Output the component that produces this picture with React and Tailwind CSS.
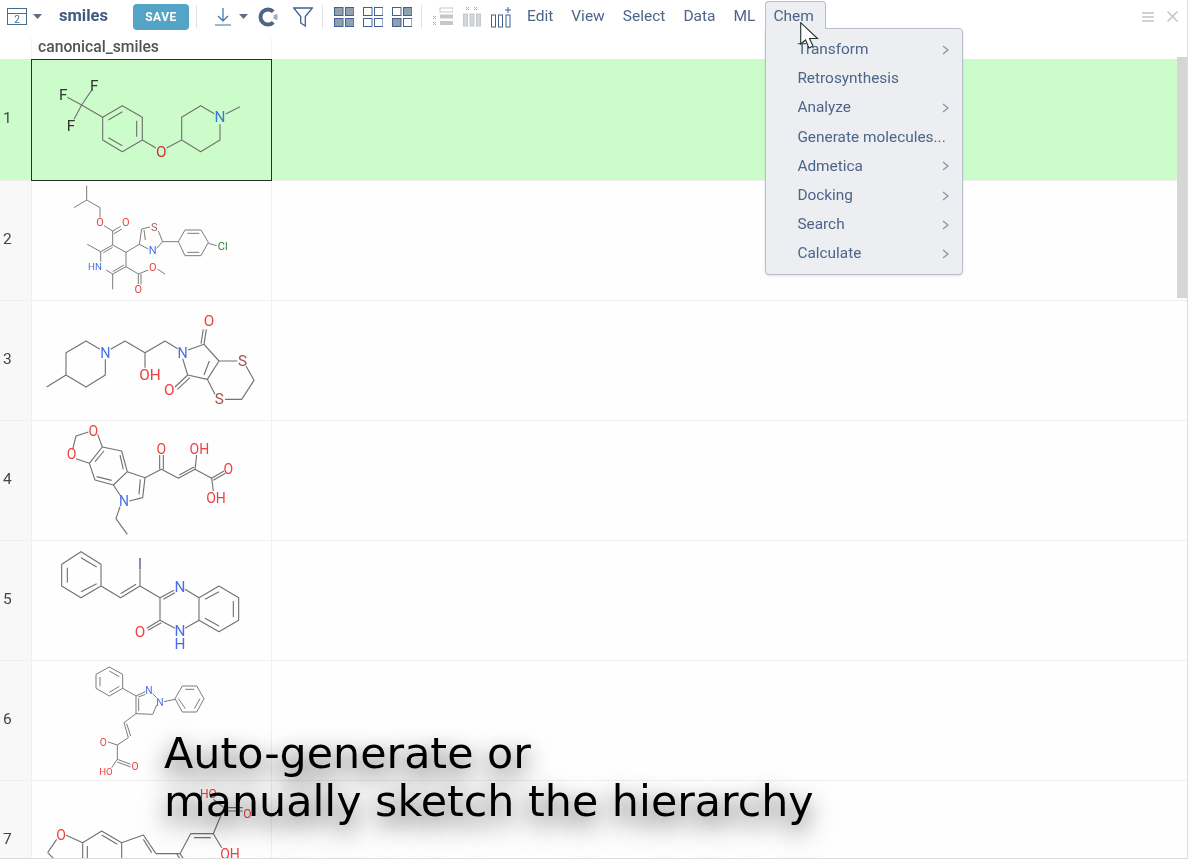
import React from "react";

const Mol = ({ top, d, labels, size = 42, sw = 3.400 }) => (
  <svg width="240" height="120" viewBox={`93 ${top} 720 360`} className="block shrink-0" style={{ fontFamily: "Roboto, sans-serif" }}>
    <path d={d} fill="none" stroke="#727272" strokeWidth={sw} strokeLinejoin="round" />
    {labels.map(([t, x, y, c, s], i) => (
      <text key={i} x={x} y={y} fill={c} fontSize={s || size} textAnchor="middle" dominantBaseline="central">{t}</text>
    ))}
  </svg>
);

const R = "#f04040", B = "#4a6ee8", K = "#333";

const mols = [
  {
    top: 12, size: 46, labels: [["F", 190, 120, K], ["F", 283, 93, K], ["F", 213, 212, K], ["O", 484, 290, "#c8323c"], ["N", 660, 187, "#3a7bd5"]],
    d: "M245 150L202 127M245 150L274 107M245 150L222 193M245 150L308 187L367 152L427 187L427 255L367 290L308 255L308 187M325 195L367 170M410 197L410 245M325 248L367 272M427 255L468 279M500 279L545 255L545 187L602 152L643 176M660 208L660 255L602 290L545 255M677 177L720 155",
  },
  {
    top: 378, size: 33, sw: 2.800, labels: [["O", 300, 502, R], ["O", 377, 502, R], ["HN", 285, 635, B, 29], ["O", 415, 703, R], ["O", 458, 638, R], ["S", 463, 517, "#a06060"], ["N", 458, 587, B], ["Cl", 668, 573, "#2e7d32"]],
    d: "M260 392L260 435M222 458L260 435L300 458L300 488M312 512L338 528L362 514M342 536L366 522M338 528L338 570L378 592L378 635L338 657L318 645M302 620L302 590L338 570M310 593L338 577M372 630L338 650M302 590L262 568M338 657L338 703M378 635L415 657L415 688M423 657L423 688M415 657L445 645M472 642L495 657M378 592L418 568L425 522L450 516M432 525L436 555M475 528L488 560L470 580M445 582L418 568M488 560L535 560L555 525L603 525L625 562L603 602L555 602L535 560M562 535L598 535M562 592L598 592M625 565L650 572",
  },
  {
    top: 0, size: 46, labels: [["N", 316, 155, B, 43], ["OH", 450, 222, R], ["N", 548, 155, B, 43], ["O", 627, 60, R], ["O", 508, 268, R], ["S", 728, 180, "#a85050"], ["S", 658, 295, "#a85050"]],
    d: "M140 258L198 222L198 155L258 120L300 145M316 175L316 222L258 258L198 222M332 145L375 120L435 155L495 120L533 143M435 155L435 200M564 147L612 130L657 180L622 235L563 222L548 173M628 180L612 222M612 130L619 85M603 128L610 85M563 222L525 258M570 230L532 265M657 180L712 180M738 195L762 238L725 295L675 295M645 280L622 235",
  },
  {
    top: 360, size: 42, labels: [["O", 280, 390, R], ["O", 215, 460, R], ["N", 372, 600, B], ["O", 484, 443, R], ["OH", 598, 443, R], ["O", 685, 503, R], ["OH", 648, 590, R]],
    d: "M228 405L265 393M228 405L218 445M293 400L307 438M228 473L268 487L307 438L365 450L382 512L340 552L285 537L268 487M285 482L312 450M360 462L370 505M290 527L335 538M382 512L435 530L428 590L388 600M362 585L340 552M421 535L417 580M435 530L484 505L535 532L585 505L635 532L672 510M479 505L479 462M490 505L490 462M538 522L582 498M585 505L590 462M640 538L676 517M635 532L640 570M360 617L348 653L382 700",
  },
  {
    top: 0, size: 46, labels: [["N", 540, 138, B], ["N", 540, 270, B], ["H", 540, 310, B], ["O", 420, 272, R], ["I", 420, 68, "#5a5a90", 44]],
    d: "M185 70L243 32L303 70L303 135L243 170L185 135L185 70M202 80L202 125M243 50L290 78M290 128L243 152M303 135L362 170L420 135M362 158L408 130M420 135L420 85M420 135L480 170L522 148M555 145L597 170L597 238L555 262M525 262L480 238L480 170M490 175L525 155M480 238L440 262M484 245L444 268M597 170L657 135L716 170L716 238L657 272L597 238M615 175L657 152M700 180L700 228M615 232L657 255",
  },
  {
    top: 360, size: 31, sw: 2.800, labels: [["N", 447, 447, B], ["N", 480, 483, B], ["O", 310, 603, R], ["O", 405, 675, R], ["HO", 318, 690, R, 29]],
    d: "M328 378L368 400L368 442L328 465L288 442L288 400L328 378M300 408L300 436M328 390L358 407M358 436L328 454M368 442L408 465L436 452M415 468L436 460M458 458L470 470M470 492L458 520L408 518L408 465M416 472L416 510M525 473L547 435L590 435L612 473L590 513L547 513L525 473M556 445L583 445M600 473L583 503M556 503L535 473M492 482L525 475M408 518L372 545L385 590M380 548L392 585M385 590L352 612L324 603M352 612L352 655L392 670M352 663L392 678M352 655L335 680",
  },
  {
    top: 720, size: 42, labels: [["O", 183, 882, R], ["OH", 690, 938, R], ["HO", 625, 760, R, 36], ["O", 742, 820, R, 36]],
    d: "M143 935L170 895M143 935L165 957M197 882L248 905L305 870L365 905L365 957M248 905L248 957M262 915L262 957M305 882L352 910M365 905L430 882L468 938M430 895L455 935M468 938L540 938L572 878L640 878M582 890L632 890M540 938L553 957M530 938L542 957M640 878L665 920M640 878L672 800L728 800M672 810L728 810M672 800L640 775",
  },
];

const Caret = () => <svg width="9" height="5" viewBox="0 0 9 5"><path d="M0 0h9L4.500 5z" fill="#5d6f86" /></svg>;
const Divider = () => <div className="w-px h-[23px] bg-[#dfe1e4]" />;
const Grid = ({ f }) => (
  <svg width="20" height="20" viewBox="0 0 20 20">
    {[[0, 0], [11, 0], [0, 11], [11, 11]].map(([x, y], i) => (
      <rect key={i} x={x + 0.5} y={y + 0.5} width="8.500" height="8" fill={f[i] ? "#8fa0b0" : "none"} stroke="#3f6290" strokeWidth="1" />
    ))}
  </svg>
);

const menu = [["Transform", 1], ["Retrosynthesis", 0], ["Analyze", 1], ["Generate molecules...", 0], ["Admetica", 1], ["Docking", 1], ["Search", 1], ["Calculate", 1]];

export default function App() {
  return (
    <div className="relative w-[1188px] h-[859px] overflow-hidden bg-white border-b border-r border-[#dcdcdc] font-['Roboto',sans-serif] blur-[0.3px]">
      <div className="relative z-10 flex items-center h-[33px] bg-white">
        <svg className="ml-[7px]" width="20" height="17" viewBox="0 0 20 17">
          <rect x="0.500" y="0.500" width="19" height="16" fill="none" stroke="#4a6a90" />
          <path d="M1 5.500h18" stroke="#4a6a90" />
          <text x="10" y="14.500" fontSize="10" textAnchor="middle" fill="#4a6a90" fontFamily="Roboto, sans-serif">2</text>
        </svg>
        <div className="ml-[6px]"><Caret /></div>
        <span className="ml-[17px] w-[74px] text-[16.500px] font-bold text-[#40597c]">smiles</span>
        <div className="flex items-center justify-center w-[56px] h-[26px] rounded bg-[#53a4c6] text-white text-[12px] font-bold tracking-[0.5px]">SAVE</div>
        <div className="ml-[7px]"><Divider /></div>
        <svg className="ml-[18px]" width="16" height="19" viewBox="0 0 16 19" fill="none" stroke="#3f6eaa" strokeWidth="1.200">
          <path d="M8 1v13M3 9l5 5 5-5M0 18h16" />
        </svg>
        <div className="ml-[8px]"><Caret /></div>
        <svg className="ml-[10px]" width="20" height="20" viewBox="0 0 20 20" fill="none" strokeWidth="4">
          <path d="M15.300 4.700A7.500 7.500 0 1 0 15.300 15.300" stroke="#4f6584" />
          <path d="M17.200 7.500A7.500 7.500 0 0 1 17.200 12.500" stroke="#9fb0c2" />
        </svg>
        <svg className="ml-[15px]" width="20" height="20" viewBox="0 0 20 20" fill="none" stroke="#3f6290" strokeWidth="1.300">
          <path d="M0.700 1h18.600l-7 8.500v9.500l-4.600-3v-6.500z" />
        </svg>
        <div className="ml-[9px]"><Divider /></div>
        <div className="ml-[11px]"><Grid f={[1, 1, 1, 1]} /></div>
        <div className="ml-[9px]"><Grid f={[0, 0, 0, 0]} /></div>
        <div className="ml-[9px]"><Grid f={[0, 1, 1, 0]} /></div>
        <div className="ml-[9px]"><Divider /></div>
        <svg className="ml-[11px]" width="20" height="20" viewBox="0 0 20 20" fill="none">
          <rect x="7" y="1" width="13" height="4" stroke="#c4c8cc" /><rect x="7" y="7.500" width="13" height="4" fill="#c4c8cc" /><rect x="7" y="14" width="13" height="4" fill="#c4c8cc" />
          <path d="M0 9l3 3M3 9l-3 3M0 15l3 3M3 15l-3 3" stroke="#a9adb2" />
        </svg>
        <svg className="ml-[10px]" width="18" height="21" viewBox="0 0 18 21" fill="none">
          <rect x="0.500" y="8" width="4" height="12" fill="#d4d7da" stroke="#c4c8cc" /><rect x="7" y="8" width="4" height="12" fill="#d4d7da" stroke="#c4c8cc" /><rect x="13.500" y="8" width="4" height="12" fill="#d4d7da" stroke="#c4c8cc" />
          <path d="M3 1l3 3M6 1l-3 3M11 1l3 3M14 1l-3 3" stroke="#a9adb2" />
        </svg>
        <svg className="ml-[10px]" width="20" height="22" viewBox="0 0 20 22" fill="none" stroke="#3f6290">
          <rect x="0.500" y="9" width="4" height="12" /><rect x="7.500" y="9" width="4" height="12" /><rect x="15" y="9" width="4" height="12" />
          <path d="M17 1v6M14 4h6" />
        </svg>
        <div className="ml-[16px] pt-px flex items-center gap-[18px] text-[15.500px] text-[#4c6588]">
          <span>Edit</span><span>View</span><span>Select</span><span>Data</span><span>ML</span>
        </div>
        <div className="relative ml-[10px] self-start mt-px pt-[2px] pl-[7px] w-[61px] h-[28px] bg-[#eceef1] border border-b-0 border-[#b8bfc8] rounded-t-sm flex items-center justify-start text-[15.500px] text-[#4c6588] z-10">
          Chem
          <div className="absolute left-[-1px] top-[26px] w-[198px] h-[247px] bg-[#eceef1] border border-[#b8bfc8] rounded-b-sm rounded-tr-sm shadow-sm pt-[6px] -z-10">
            {menu.map(([t, sub]) => (
              <div key={t} className="flex items-center justify-between h-[29.200px] pl-[31px] pr-[13px] text-[15.400px] text-[#4c6588] whitespace-nowrap">
                <span>{t}</span>
                {sub ? <svg width="7" height="10" viewBox="0 0 7 10" fill="none" stroke="#8a97a8" strokeWidth="1.300"><path d="M1 1l5 4-5 4" /></svg> : null}
              </div>
            ))}
          </div>
          <div className="absolute left-0 right-0 bottom-[-2px] h-[3px] bg-[#eceef1]" />
        </div>
        <div className="ml-auto flex items-center gap-[13px] pr-[9px]">
          <svg width="12" height="10" viewBox="0 0 12 10" stroke="#c4c4c4" strokeWidth="1.400"><path d="M0 1h12M0 5h12M0 9h12" /></svg>
          <svg width="11" height="11" viewBox="0 0 11 11" stroke="#c4c4c4" strokeWidth="1.500"><path d="M0.500 0.500l10 10M10.500 0.500l-10 10" /></svg>
        </div>
      </div>

      <div className="flex h-[26px] pl-[31px]">
        <div className="w-[241px] h-[21px] mt-[5px] pl-[6px] border-x border-[#f3f3f3] text-[15.700px] font-medium leading-[18px] text-[#4e5556]">canonical_smiles</div>
      </div>

      <div className="relative">
        {mols.map((m, i) => (
          <div key={i} className={`flex border-b border-[#f0f0f0] ${i === 0 ? "h-[122px] bg-[#cdfccb]" : "h-[120px] bg-[#fefefe]"}`}>
            <div className={`w-[32px] shrink-0 flex items-center pl-[3px] pb-px text-[15.500px] text-[#444] border-r border-[#efefef] ${i === 0 ? "" : "bg-[#f8f8f8]"}`}>{i + 1}</div>
            <div className="relative w-[240px] shrink-0 border-r border-[#efefef]">
              <div className="overflow-hidden h-full -ml-px"><Mol {...m} /></div>
              {i === 0 && <div className="absolute left-[-1px] top-0 w-[241px] h-[122px] border-[1.500px] border-[#2a2f2a]" />}
            </div>
            <div className="flex-1" />
          </div>
        ))}
        <div className="absolute right-0 top-[-2px] w-[10px] h-[241px] bg-[#d6d6d6]" />
      </div>

      <svg className="absolute z-20 left-[800px] top-[22px]" width="20" height="27" viewBox="0 0 20 27">
        <path d="M0.700 0.700V22L5.500 18L9 26l4-2-3.500-7.500H17.500z" fill="#fff" stroke="#20352a" strokeWidth="1.100" />
      </svg>

      <div className="absolute z-20 left-[164px] top-[729px] text-[42.800px] leading-[48px] text-black whitespace-pre font-['DejaVu_Sans',sans-serif] [text-shadow:0_8px_20px_rgba(0,0,0,0.45),0_12px_32px_rgba(0,0,0,0.4)]">
        {"Auto-generate or\nmanually sketch the hierarchy"}
      </div>
    </div>
  );
}
